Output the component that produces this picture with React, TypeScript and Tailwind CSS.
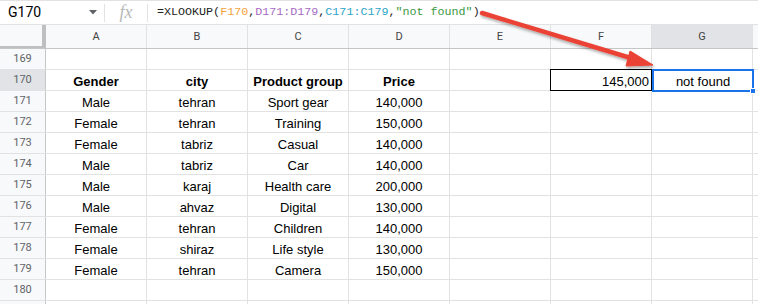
import React from 'react'

const cols = ['A', 'B', 'C', 'D', 'E', 'F', 'G']

const data: [string, string, string, string][] = [
  ['Male', 'tehran', 'Sport gear', '140,000'],
  ['Female', 'tehran', 'Training', '150,000'],
  ['Female', 'tabriz', 'Casual', '140,000'],
  ['Male', 'tabriz', 'Car', '140,000'],
  ['Male', 'karaj', 'Health care', '200,000'],
  ['Male', 'ahvaz', 'Digital', '130,000'],
  ['Female', 'tehran', 'Children', '140,000'],
  ['Female', 'shiraz', 'Life style', '130,000'],
  ['Female', 'tehran', 'Camera', '150,000'],
]

function Cell({ children, className = '' }: { children?: React.ReactNode; className?: string }) {
  return (
    <div
      className={`flex h-full w-[101px] shrink-0 items-center justify-center border-r border-[#e2e2e2] pt-[3px] text-[13px] text-black ${className}`}
    >
      {children}
    </div>
  )
}

function RowHead({ n, active = false }: { n?: number; active?: boolean }) {
  return (
    <div
      className={`flex h-full w-[46px] shrink-0 items-center justify-center border-r border-[#c4c7c5] pt-[1px] text-[11px] text-[#5f6368] ${
        active ? 'bg-[#e1e3e6]' : 'bg-[#f8f9fa]'
      }`}
      style={{ fontFamily: 'Roboto, sans-serif' }}
    >
      {n}
    </div>
  )
}

export default function App() {
  return (
    <div
      className="relative h-[304px] w-[758px] overflow-hidden bg-white"
      style={{ fontFamily: '"Liberation Sans", Arial, sans-serif' }}
    >
      {/* Formula bar */}
      <div className="flex h-[25px] items-center border-y border-[#e2e2e2] bg-white">
        <div className="flex w-[104px] items-center justify-between pl-2 pr-[7px] text-[14px] text-black" style={{ fontFamily: 'Roboto, sans-serif' }}>
          <span>G170</span>
          <svg width="8" height="5" viewBox="0 0 8 5">
            <path d="M0 0h8L4 4.5z" fill="#5f6368" />
          </svg>
        </div>
        <div className="h-[18px] w-px bg-[#e2e2e2]" />
        <div className="flex w-[42px] items-center justify-center">
          <span className="text-[18px] italic text-[#b8b8b8]" style={{ fontFamily: '"Liberation Serif", serif' }}>
            fx
          </span>
        </div>
        <div className="h-[18px] w-px bg-[#e2e2e2]" />
        <div className="pl-[9px] pt-[1px] text-[11.7px] text-[#222]" style={{ fontFamily: '"Liberation Mono", monospace' }}>
          =XLOOKUP(<span className="text-[#f3a23a]">F170</span>,
          <span className="text-[#a56bc2]">D171:D179</span>,
          <span className="text-[#2aa5c6]">C171:C179</span>,
          <span className="text-[#3c9a3f]">"not found"</span>)
        </div>
      </div>

      {/* Column header */}
      <div className="flex h-[24px] border-b border-[#c4c7c5] bg-[#f8f9fa]">
        <div className="h-full w-[46px] shrink-0 border-r-4 border-b-2 border-[#bfbfbf]" />
        {cols.map((c) => (
          <div
            key={c}
            className={`flex h-full w-[101px] shrink-0 items-center justify-center border-r border-[#e2e2e2] pt-[1px] text-[11px] text-[#444] ${
              c === 'G' ? 'bg-[#e1e3e6]' : ''
            }`}
            style={{ fontFamily: 'Roboto, sans-serif' }}
          >
            {c}
          </div>
        ))}
        <div className="flex-1" />
      </div>

      {/* Row 169 */}
      <div className="flex h-[21px] border-b border-[#e2e2e2]">
        <RowHead n={169} />
        {cols.map((c) => (
          <Cell key={c} />
        ))}
      </div>

      {/* Row 170 */}
      <div className="flex h-[21px] border-b border-[#e2e2e2]">
        <RowHead n={170} active />
        <Cell className="font-bold">Gender</Cell>
        <Cell className="font-bold">city</Cell>
        <Cell className="font-bold">Product group</Cell>
        <Cell className="font-bold">Price</Cell>
        <Cell />
        <div className="flex h-[22px] w-[102px] shrink-0 -translate-x-px -translate-y-px items-center justify-end border border-black pr-[2px] pt-[3px] text-[13px] text-black">
          145,000
        </div>
        <div className="relative flex h-[23px] w-[102px] shrink-0 -translate-x-px -translate-y-px items-center justify-center border-2 border-[#1a73e8] pt-[2px] text-[13px] text-black">
          not found
          <div className="absolute -bottom-[4px] -right-[4px] h-[6px] w-[6px] border border-white bg-[#1a73e8]" />
        </div>
      </div>

      {data.map((r, i) => (
        <div key={i} className="flex h-[21px] border-b border-[#e2e2e2]">
          <RowHead n={171 + i} />
          <Cell>{r[0]}</Cell>
          <Cell>{r[1]}</Cell>
          <Cell>{r[2]}</Cell>
          <Cell>{r[3]}</Cell>
          <Cell />
          <Cell />
          <Cell />
        </div>
      ))}

      {/* Row 180 */}
      <div className="flex h-[21px] border-b border-[#e2e2e2]">
        <RowHead n={180} />
        {cols.map((c) => (
          <Cell key={c} />
        ))}
      </div>
      <div className="flex h-[21px]">
        <RowHead />
        {cols.map((c) => (
          <Cell key={c} />
        ))}
      </div>

      {/* Red callout arrow */}
      <svg className="pointer-events-none absolute left-0 top-0" width="758" height="304">
        <defs>
          <filter id="sh" x="-10%" y="-10%" width="120%" height="140%">
            <feDropShadow dx="1" dy="2" stdDeviation="1.5" floodColor="#000" floodOpacity="0.35" />
          </filter>
        </defs>
        <g filter="url(#sh)" fill="#ea4335" stroke="#ea4335">
          <line x1="482" y1="13" x2="634" y2="59" strokeWidth="4.5" strokeLinecap="round" />
          <path d="M653 65 L630 51 L626 66 Z" strokeWidth="1" strokeLinejoin="round" />
        </g>
      </svg>
    </div>
  )
}
